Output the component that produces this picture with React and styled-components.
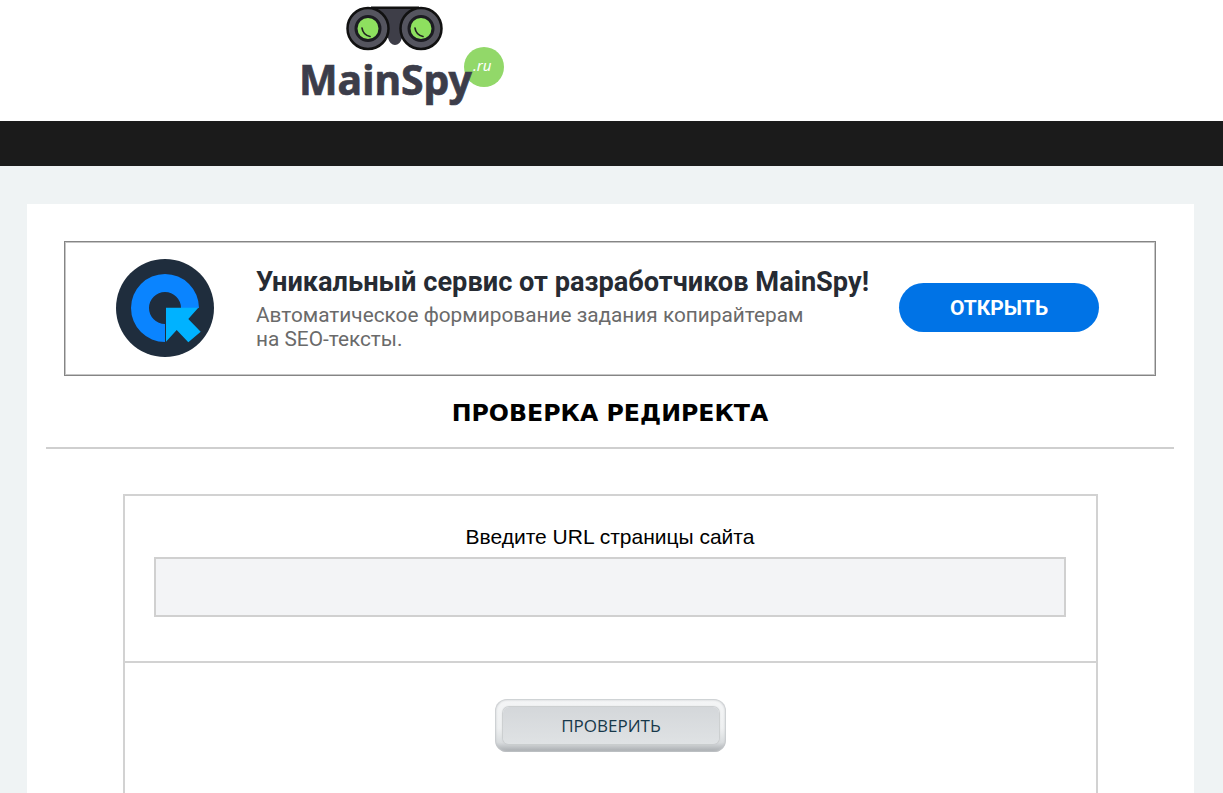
import styled, { createGlobalStyle } from "styled-components";

const GlobalStyle = createGlobalStyle`
  html, body {
    margin: 0;
    padding: 0;
    height: 793px;
    overflow: hidden;
    background: #eff3f4;
    font-family: "Liberation Sans", Arial, sans-serif;
  }
`;

const Header = styled.header`
  height: 121px;
  background: #fff;
  padding-left: 299px;
  box-sizing: border-box;
  overflow: hidden;
`;

const Logo = styled.svg`
  display: block;
  width: 210px;
  height: 107px;
`;

const NavBar = styled.nav`
  height: 45px;
  background: #1b1b1b;
`;

const Main = styled.main`
  padding: 38px 29px 0 27px;
`;

const Card = styled.section`
  background: #fff;
  padding: 37px 20px 0 19px;
  display: flex;
  flex-direction: column;
  min-height: 700px;
`;

const Banner = styled.a`
  display: flex;
  align-items: center;
  height: 135px;
  box-sizing: border-box;
  margin: 0 18px;
  border: 1px solid #858585;
  box-shadow: inset 0 0 0 1px #c6c6c6;
  padding: 0 0 2px 51px;
  background: #fff;
`;

const BannerIcon = styled.svg`
  width: 98px;
  height: 98px;
  flex: none;
`;

const BannerText = styled.div`
  margin: 3px 0 0 42px;
  width: 643px;
  font-family: Roboto, sans-serif;
  flex: none;
`;

const BannerTitle = styled.div`
  font-size: 27.2px;
  line-height: 30px;
  font-weight: 700;
  color: #262b33;
  white-space: nowrap;
`;

const BannerSub = styled.div`
  margin-top: 6px;
  font-size: 20.8px;
  line-height: 24px;
  color: #6a6a6a;
`;

const OpenButton = styled.div`
  width: 200px;
  height: 49px;
  border-radius: 25px;
  background: #0073e6;
  color: #fff;
  font-family: Roboto, sans-serif;
  font-weight: 700;
  font-size: 21px;
  display: flex;
  align-items: center;
  justify-content: center;
`;

const Title = styled.h1`
  margin: 22px 0 0;
  font-family: "DejaVu Sans", sans-serif;
  font-size: 23.7px;
  line-height: 30px;
  font-weight: 700;
  color: #000;
  text-align: center;
`;

const Divider = styled.hr`
  margin: 19px 0 0;
  border: none;
  border-top: 2px solid #cfcfcf;
`;

const FormBox = styled.form`
  margin: 45px 76px 0 77px;
  border: 2px solid #d2d2d2;
  border-bottom: none;
`;

const FieldRow = styled.div`
  height: 167px;
  box-sizing: border-box;
  padding: 28px 30px 0 29px;
  border-bottom: 2px solid #d2d2d2;
`;

const FieldLabel = styled.label`
  display: block;
  text-align: center;
  font-size: 21px;
  line-height: 26px;
  color: #000;
`;

const UrlInput = styled.input`
  display: block;
  width: 100%;
  height: 60px;
  margin-top: 7px;
  box-sizing: border-box;
  border: 2px solid #d0d0d0;
  background: #f3f4f6;
  outline: none;
`;

const ButtonRow = styled.div`
  display: flex;
  justify-content: center;
  padding-top: 36px;
  height: 200px;
  box-sizing: border-box;
`;

const CheckButton = styled.button`
  display: flex;
  width: 231px;
  height: 53px;
  box-sizing: border-box;
  border: none;
  border-radius: 12px;
  padding: 8px 7px 8px 8px;
  background: linear-gradient(180deg, #f4f5f6 0%, #eef0f1 55%, #d9dcde 82%, #a4a8ac 100%);
  box-shadow: inset 0 0 2px 1px #c3c6c9;
`;

const ButtonFace = styled.span`
  flex: 1;
  display: flex;
  align-items: center;
  justify-content: center;
  border-radius: 6px;
  background: linear-gradient(180deg, #d4d7da 0%, #dfe2e4 100%);
  box-shadow: 0 0 1px 1px #c9ccce;
  color: #17384a;
  font-family: "Open Sans", sans-serif;
  font-size: 17px;
`;

export default function App() {
  return (
    <>
      <GlobalStyle />
      <Header>
        <Logo viewBox="0 0 210 107">
          {/* binoculars */}
          <path d="M72 7H120V30L103 38Q101 45 96 45Q91 45 89 38L72 30Z" fill="#3e3e48" />
          <rect x="72" y="6.5" width="48" height="2.5" fill="#111" />
          <circle cx="69" cy="28.5" r="20.5" fill="#55555f" stroke="#111" strokeWidth="2.5" />
          <circle cx="122" cy="28.5" r="20.5" fill="#55555f" stroke="#111" strokeWidth="2.5" />
          <circle cx="69" cy="28.5" r="12" fill="#8ee05f" stroke="#1c1c22" strokeWidth="3" />
          <circle cx="122" cy="28.5" r="12" fill="#8ee05f" stroke="#1c1c22" strokeWidth="3" />
          <path d="M63 28 Q64 35 71 36.5" fill="none" stroke="#222" strokeWidth="1.7" strokeLinecap="round" />
          <path d="M116 28 Q117 35 124 36.5" fill="none" stroke="#222" strokeWidth="1.7" strokeLinecap="round" />
          {/* wordmark */}
          <circle cx="185" cy="67" r="20" fill="#92d869" />
          <text x="0" y="95" fontFamily="'Noto Sans', sans-serif" fontWeight="700" fontSize="42" fill="#3c3d4a" stroke="#3c3d4a" strokeWidth="0.7" textLength="173" lengthAdjust="spacingAndGlyphs">MainSpy</text>
          <text x="174" y="71" fontFamily="'Noto Sans', sans-serif" fontStyle="italic" fontSize="15" fill="#fff">.ru</text>
        </Logo>
      </Header>
      <NavBar />
      <Main>
        <Card>
          <Banner>
            <BannerIcon viewBox="0 0 98 98">
              <circle cx="49" cy="49" r="49" fill="#1f2d3d" />
              <path d="M83 49A34 34 0 1 0 49 83V65A16 16 0 1 1 65 49Z" fill="#0a84ff" />
              <path d="M50 48.7H82.3L72.3 60 84.7 72.7 72.3 83.3 60.7 71 50 82.7Z" fill="#00b2ff" />
            </BannerIcon>
            <BannerText>
              <BannerTitle>Уникальный сервис от разработчиков MainSpy!</BannerTitle>
              <BannerSub>
                Автоматическое формирование задания копирайтерам
                <br />
                на SEO-тексты.
              </BannerSub>
            </BannerText>
            <OpenButton>ОТКРЫТЬ</OpenButton>
          </Banner>
          <Title>ПРОВЕРКА РЕДИРЕКТА</Title>
          <Divider />
          <FormBox>
            <FieldRow>
              <FieldLabel>Введите URL страницы сайта</FieldLabel>
              <UrlInput type="text" />
            </FieldRow>
            <ButtonRow>
              <CheckButton type="button">
                <ButtonFace>ПРОВЕРИТЬ</ButtonFace>
              </CheckButton>
            </ButtonRow>
          </FormBox>
        </Card>
      </Main>
    </>
  );
}
